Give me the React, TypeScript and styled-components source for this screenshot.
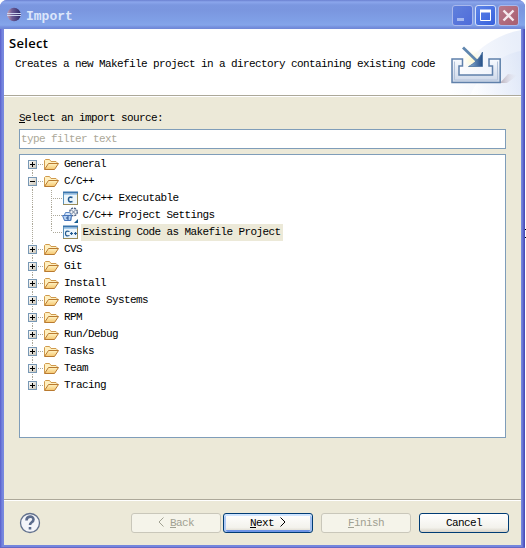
import React from "react";
import styled, { createGlobalStyle, css } from "styled-components";

const Global = createGlobalStyle`
  * { box-sizing: border-box; }
  body { margin: 0; background: #fff; overflow: hidden; }
`;

const Page = styled.div`
  position: relative;
  width: 526px;
  height: 548px;
  color: #000;
  font: 11px/17px "Liberation Mono", monospace;
  letter-spacing: -0.6px;
  white-space: pre;
`;

const Window = styled.div`
  width: 525px;
  height: 548px;
  display: flex;
  flex-direction: column;
  border-radius: 7px 7px 0 0;
  overflow: hidden;
  background: linear-gradient(90deg, #5758c8 0, #6674d6 1px, #7b8be0 3px, #7486dd 4px, #7486dd 522px, #6069cc 523px, #4343b4 525px);
  padding: 0 4px 3px;
  box-shadow: inset 0 -1px #6668c6;
`;

const TitleBar = styled.header`
  flex: none;
  height: 29px;
  margin: 0 -4px;
  padding: 0 6px 0 7px;
  display: flex;
  align-items: center;
  background: linear-gradient(#6a80d0 0, #8ba6ec 2px, #7b97e0 5px, #7a96df 10px, #7f9fe6 20px, #84a5ea 25px, #7690de 27px, #6f87d6 29px);
`;

const Title = styled.span`
  flex: 1;
  margin: 3px 0 0 5px;
  color: #dce6fb;
  font-size: 13px;
  font-weight: bold;
  letter-spacing: 0;
`;

const WindowButtons = styled.div`
  display: flex;
  gap: 2px;
  padding-top: 2px;
`;

const CaptionButton = styled.span<{ $kind: "min" | "max" | "close" }>`
  width: 21px;
  height: 21px;
  border-radius: 3px;
  border: 1px solid ${(p) => (p.$kind === "max" ? "#d5e0fa" : "#a9b8ec")};
  background: ${(p) =>
    p.$kind === "close"
      ? "linear-gradient(135deg, #b8798b, #a85e70)"
      : p.$kind === "max"
        ? "linear-gradient(135deg, #5d84e8, #3660dc)"
        : "linear-gradient(135deg, #6080dc, #4f6cda)"};
  svg { display: block; }
`;

const Banner = styled.section`
  flex: none;
  height: 66px;
  width: 517px;
  display: flex;
  background: #fff;
`;

const BannerText = styled.div`
  flex: 1;
  padding: 5px 0 0 5px;
`;

const Heading = styled.h1`
  margin: 0;
  font: 600 13px/18px "Open Sans", sans-serif;
  letter-spacing: 0.3px;
`;

const Description = styled.p`
  margin: 4px 0 0 6px;
`;

const Etched = styled.hr`
  flex: none;
  width: 517px;
  height: 2px;
  margin: 0;
  border: 0;
  border-top: 1px solid #aca899;
  background: #fff;
`;

const Body = styled.main`
  flex: 1;
  width: 517px;
  padding: 13px 15px 0;
  background: #ece9d8;
`;

const Label = styled.label`
  display: block;
  height: 19px;
`;

const Filter = styled.div`
  height: 20px;
  padding: 1px 1px;
  border: 1px solid #7f9db9;
  background: #fff;
  color: #aca899;
`;

const Tree = styled.div`
  height: 284px;
  margin-top: 5px;
  padding: 1px 0;
  border: 1px solid #7f9db9;
  background: #fff;
`;

const Row = styled.div`
  display: flex;
  height: 17px;
  > svg { flex: none; }
`;

const ItemText = styled.span<{ $selected?: boolean; $child?: boolean }>`
  height: 17px;
  padding: 0 2px 0 1px;
  margin-left: 2px;
  ${(p) => p.$child && css`
    padding-left: 1.5px;
  `}
  ${(p) => p.$selected && css`background: #ece9d8;`}
`;

const Footer = styled.footer`
  flex: none;
  width: 517px;
  height: 44px;
  display: flex;
  align-items: center;
  padding: 0 12px 0 15px;
  background: #ece9d8;
`;

const Spacer = styled.div`
  flex: 1;
`;

const Button = styled.button<{ $default?: boolean; $gap?: number }>`
  width: 90px;
  height: 20px;
  margin: 0 0 0 ${(p) => p.$gap ?? 2}px;
  padding: 0;
  border: 1px solid #003c74;
  border-radius: 3px;
  background: linear-gradient(#fff, #f3f2ec 75%, #d9d4c9);
  color: #000;
  font: inherit;
  letter-spacing: inherit;
  line-height: 18px;
  ${(p) => p.$default && css`
    box-shadow: inset 0 2px #cee4ff, inset 2px 0 #b0caf4, inset -2px 0 #a3c0f0, inset 0 -2px #6e94e6;
  `}
  &:disabled {
    color: #a1a192;
    border-color: #c9c7ba;
    background: #f5f4ea;
  }
`;

const ButtonArrow = styled.svg`
  width: 6px;
  height: 10px;
  vertical-align: -1px;
  fill: none;
  stroke: currentColor;
`;

const Caret = styled.i`
  position: absolute;
  left: 525px;
  top: 229px;
  width: 1px;
  height: 9px;
  border: solid #000;
  border-width: 1px 0;
`;

const EclipseLogo = () => (
  <svg width="14" height="15" viewBox="0 0 14 15">
    <defs>
      <linearGradient id="orb" x1="0" x2="1">
        <stop stopColor="#c8a0b0" /><stop offset=".35" stopColor="#6f5d96" /><stop offset="1" stopColor="#2c2868" />
      </linearGradient>
    </defs>
    <circle cx="7" cy="7.5" r="6.7" fill="url(#orb)" />
    <path d="M0 6.500h14M0 8.500h14" stroke="#ccd4ef" />
  </svg>
);

const ImportArt = () => (
  <svg width="77" height="66" viewBox="0 0 77 66">
    <defs>
      <linearGradient id="sky" x1="0" x2="1" y1=".6" y2=".4">
        <stop stopColor="#fff" /><stop offset="1" stopColor="#dce5f7" />
      </linearGradient>
      <linearGradient id="tray" x1="0" y1="0" x2="0" y2="1">
        <stop stopColor="#f8fbff" /><stop offset="1" stopColor="#cbd6e8" />
      </linearGradient>
      <linearGradient id="arrow" x1="0" x2="1">
        <stop stopColor="#8fb6d8" /><stop offset="1" stopColor="#264f87" />
      </linearGradient>
      <linearGradient id="shade">
        <stop stopColor="#b7adb8" /><stop offset="1" stopColor="#e7e5ef" stopOpacity="0" />
      </linearGradient>
      <radialGradient id="glow">
        <stop stopColor="#fff9c8" /><stop offset="1" stopColor="#fffce8" stopOpacity="0" />
      </radialGradient>
    </defs>
    <path d="M0 66C22 27 46 7 77 1v65z" fill="url(#sky)" opacity=".65" />
    <path d="M26 66C40 38 58 25 77 22v44z" fill="url(#sky)" opacity=".7" />
    <path d="M56 54l8-9 10 1-11 8z" fill="url(#shade)" />
    <circle cx="29" cy="31" r="11" fill="url(#glow)" />
    <path d="M8 30h10.500v7h-3.500v9h33.500v-9h-3.500v-7h11.200v23.500H8z" fill="url(#tray)" stroke="#5f80aa" strokeWidth="1.500" />
    <path d="M10.500 32.500v18.500h43V32.500" fill="none" stroke="#b4c3da" />
    <path d="M19 18.500L35 34" stroke="#5f86ae" strokeWidth="2.800" />
    <path d="M38.500 23v14.500H24.500c5-2.500 11-8 14-14.500z" fill="url(#arrow)" stroke="#4a729f" strokeWidth=".8" />
  </svg>
);

const Branch = ({ open, first, last }: { open?: boolean; first?: boolean; last?: boolean }) => (
  <svg width="41" height="17" shapeRendering="crispEdges">
    <defs>
      <linearGradient id="knob" x1="0" y1="0" x2="1" y2="1">
        <stop stopColor="#fff" /><stop offset="1" stopColor="#c9c3b4" />
      </linearGradient>
      <linearGradient id="flap" x1="0" y1="0" x2="0" y2="1">
        <stop stopColor="#fff3c4" /><stop offset="1" stopColor="#f5c66e" />
      </linearGradient>
    </defs>
    <path
      d={`M12.500 ${first ? 8 : 0}V${last ? 8 : 17}M18 8.500h5`}
      stroke="#aca899"
      strokeDasharray="1 1"
    />
    <rect x="8.500" y="4.500" width="8" height="8" fill="url(#knob)" stroke="#7898b5" />
    <path d={open ? "M10 8.500h5" : "M10 8.500h5M12.500 6v5"} stroke="#000" />
    <g shapeRendering="auto">
      <path d="M24.500 13V4.500l1-1h4l1.500 2h5l1 1V9" fill="#fff0c0" stroke="#d09a4c" />
      <path d="M24.500 13.500L28.500 7.500h10l-4 6z" fill="url(#flap)" stroke="#b97a30" />
    </g>
  </svg>
);

type Kind = "c" | "settings" | "cpp";

const ChildBranch = ({ kind }: { kind: Kind }) => (
  <svg width="59" height="17">
    <path
      d={`M12.500 0V17M31.500 0V${kind === "cpp" ? 8 : 17}M33 8.500h10`}
      stroke="#aca899"
      strokeDasharray="1 1"
      shapeRendering="crispEdges"
    />
    {kind === "settings" ? (
      <g>
        <circle cx="53.500" cy="5" r="3.800" fill="#edf0f5" stroke="#4b5f82" strokeWidth="1.300" strokeDasharray="2 1" />
        <path d="M51 2.500l5 5M56 2.500l-5 5" stroke="#6f7f99" />
        <path d="M44.500 8l1-2.500h4l1.500 2v6H45z" fill="#d3e4f8" stroke="#5a87c4" />
        <path d="M42.500 8.500h9l-1 5h-6z" fill="#b4d1f3" stroke="#4673b8" />
        <path d="M49 10h-2v2h2" stroke="#234e91" fill="none" />
        <path d="M58 12v4h-4z" fill="#155c91" />
      </g>
    ) : (
      <g>
        <rect x="43.500" y="2.500" width="14" height="12" fill="#edf6fb" stroke="#998c59" />
        <path d="M43 2.500h15" stroke="#3975ae" strokeWidth="2" />
        <path d="M44 4.500h13" stroke="#a8cdee" />
        <path d="M43.500 3v11" stroke="#5b91ba" />
        <path
          d={kind === "c" ? "M52.500 7.500c-3-1-4 0-4 2s1 3 4 2" : "M49.500 7.500c-3-1-4 0-4 2s1 3 4 2M50 9.500h3M51.500 8v3M54 9.500h3M55.500 8v3"}
          fill="none"
          stroke="#245b91"
          strokeWidth={kind === "c" ? 1.6 : 1.2}
        />
      </g>
    )}
  </svg>
);

const HelpIcon = () => (
  <svg width="22" height="22" viewBox="0 0 22 22">
    <circle cx="11" cy="11" r="9.500" fill="#f4f5f9" stroke="#62718d" strokeWidth="1.300" />
    <path d="M7.500 8.500c0-5 7-5 7-1 0 3-3.500 2.500-3.500 5.500" fill="none" stroke="#5c6c8c" strokeWidth="2.600" />
    <path d="M9.700 15h2.600v2.500H9.700z" fill="#5c6c8c" />
  </svg>
);

const children: { kind: Kind; label: string }[] = [
  { kind: "c", label: "C/C++ Executable" },
  { kind: "settings", label: "C/C++ Project Settings" },
  { kind: "cpp", label: "Existing Code as Makefile Project" },
];

const folders = ["General", "C/C++", "CVS", "Git", "Install", "Remote Systems", "RPM", "Run/Debug", "Tasks", "Team", "Tracing"];

export default function App() {
  return (
    <Page>
      <Global />
      <Window>
        <TitleBar>
          <EclipseLogo />
          <Title>Import</Title>
          <WindowButtons>
            <CaptionButton $kind="min">
              <svg width="19" height="19"><path d="M4 13.500h7" stroke="#a5b8f0" strokeWidth="3" /></svg>
            </CaptionButton>
            <CaptionButton $kind="max">
              <svg width="19" height="19"><path d="M4.500 4v10.500h10V4M4 5.500h11" fill="none" stroke="#fff" strokeWidth="1" /><path d="M4 5h11" stroke="#fff" strokeWidth="3" /></svg>
            </CaptionButton>
            <CaptionButton $kind="close">
              <svg width="19" height="19"><path d="M4.500 4.500l10 10M14.500 4.500l-10 10" stroke="#f5e9ee" strokeWidth="2.400" /></svg>
            </CaptionButton>
          </WindowButtons>
        </TitleBar>
        <Banner>
          <BannerText>
            <Heading>Select</Heading>
            <Description>Creates a new Makefile project in a directory containing existing code</Description>
          </BannerText>
          <ImportArt />
        </Banner>
        <Etched />
        <Body>
          <Label><u>S</u>elect an import source:</Label>
          <Filter>type filter text</Filter>
          <Tree>
            {folders.map((name, i) => (
              <React.Fragment key={name}>
                <Row>
                  <Branch open={name === "C/C++"} first={i === 0} last={i === folders.length - 1} />
                  <ItemText>{name}</ItemText>
                </Row>
                {name === "C/C++" && children.map((c) => (
                  <Row key={c.label}>
                    <ChildBranch kind={c.kind} />
                    <ItemText $child $selected={c.kind === "cpp"}>{c.label}</ItemText>
                  </Row>
                ))}
              </React.Fragment>
            ))}
          </Tree>
        </Body>
        <Etched />
        <Footer>
          <HelpIcon />
          <Spacer />
          <Button disabled><ButtonArrow viewBox="0 0 6 10"><path d="M5.500 .5L1 5l4.500 4.500" /></ButtonArrow> <u>B</u>ack</Button>
          <Button $default><u>N</u>ext <ButtonArrow viewBox="0 0 6 10"><path d="M.5 .5L5 5 .5 9.500" /></ButtonArrow></Button>
          <Button disabled $gap={8}><u>F</u>inish</Button>
          <Button $gap={8}>Cancel</Button>
        </Footer>
      </Window>
      <Caret />
    </Page>
  );
}
